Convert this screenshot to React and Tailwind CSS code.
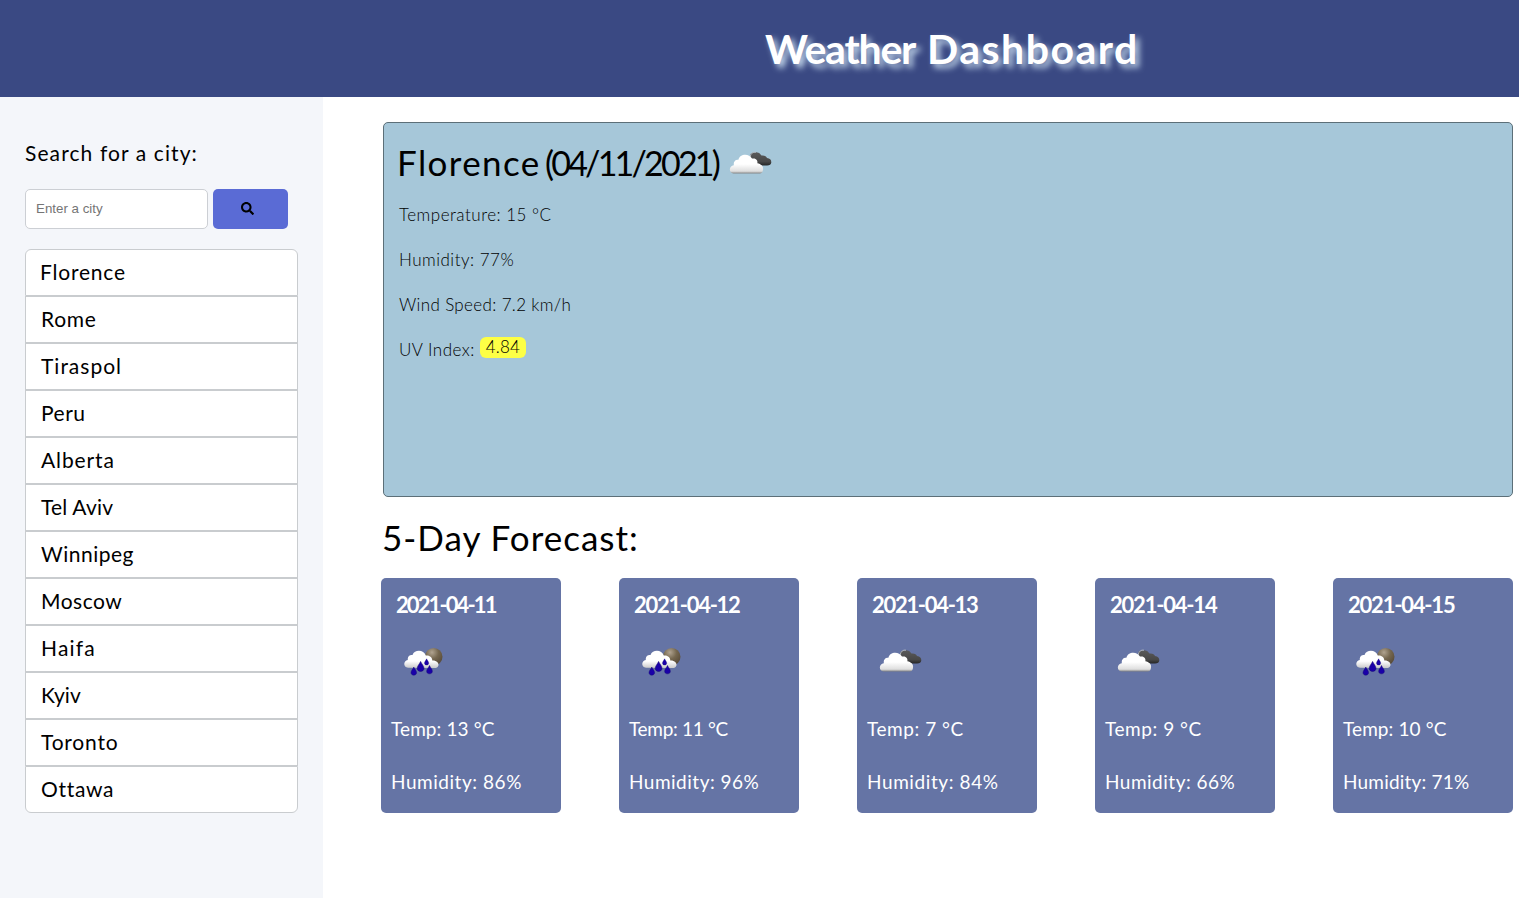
import React from "react";

const cities = [
  { name: "Florence", tracking: "tracking-[0.8px] -ml-px" },
  { name: "Rome", tracking: "tracking-[0.7px]" },
  { name: "Tiraspol", tracking: "tracking-[1px]" },
  { name: "Peru", tracking: "tracking-[0.5px]" },
  { name: "Alberta", tracking: "tracking-[0.9px]" },
  { name: "Tel Aviv", tracking: "tracking-[0.2px]" },
  { name: "Winnipeg", tracking: "tracking-[0.5px]" },
  { name: "Moscow", tracking: "tracking-[0.5px]" },
  { name: "Haifa", tracking: "tracking-[1.2px]" },
  { name: "Kyiv", tracking: "tracking-[0.1px]" },
  { name: "Toronto", tracking: "tracking-[0.8px]" },
  { name: "Ottawa", tracking: "tracking-[0.7px]" },
];

const days = [
  { date: "2021-04-11", icon: "rain", temp: "13", humidity: "86", dateTracking: "tracking-[-1.9px]", tempTracking: "tracking-[0.1px]", humidityTracking: "tracking-[0.55px]" },
  { date: "2021-04-12", icon: "rain", temp: "11", humidity: "96", dateTracking: "tracking-[-1.3px]", tempTracking: "tracking-[-0.3px]", humidityTracking: "tracking-[0.5px]" },
  { date: "2021-04-13", icon: "cloud", temp: "7", humidity: "84", dateTracking: "tracking-[-1.3px]", tempTracking: "tracking-[0.55px]", humidityTracking: "tracking-[0.6px]" },
  { date: "2021-04-14", icon: "cloud", temp: "9", humidity: "66", dateTracking: "tracking-[-1.2px]", tempTracking: "tracking-[0.55px]", humidityTracking: "tracking-[0.5px]" },
  { date: "2021-04-15", icon: "rain", temp: "10", humidity: "71", dateTracking: "tracking-[-1.2px]", tempTracking: "tracking-[0.1px]", humidityTracking: "tracking-[0.2px]" },
];

function Gradients() {
  return (
    <svg className="absolute h-0 w-0" aria-hidden="true">
      <defs>
        <linearGradient id="white-cloud" x1="0" y1="0" x2="0" y2="1">
          <stop offset="0.5" stopColor="#ffffff" />
          <stop offset="0.88" stopColor="#dedede" />
          <stop offset="1" stopColor="#858585" />
        </linearGradient>
        <linearGradient id="dark-cloud" x1="0" y1="0" x2="0" y2="1">
          <stop offset="0" stopColor="#5a5a5a" />
          <stop offset="0.7" stopColor="#484848" />
          <stop offset="1" stopColor="#262626" />
        </linearGradient>
        <linearGradient id="rain-cloud" x1="0" y1="0" x2="0" y2="1">
          <stop offset="0.6" stopColor="#ffffff" />
          <stop offset="1" stopColor="#c9c9c9" />
        </linearGradient>
        <radialGradient id="moon" cx="0.4" cy="0.25" r="0.75">
          <stop offset="0" stopColor="#b0a390" />
          <stop offset="0.5" stopColor="#75674f" />
          <stop offset="1" stopColor="#574a38" />
        </radialGradient>
      </defs>
    </svg>
  );
}

function CloudIcon() {
  return (
    <svg className="block h-[50px] w-[50px]" viewBox="0 0 50 50">
      <path
        d="M25 18.5 Q25.500 15 30 15.500 Q34 14.600 36.500 18.500 Q41 18 42 21 Q46.500 21.600 46.300 25.500 Q46 28.500 42 28.500 H30 Z"
        fill="url(#dark-cloud)"
      />
      <path d="M25 20 Q26.500 14.300 31 15.200" fill="none" stroke="#b9bfc6" strokeWidth="0.9" />
      <path
        d="M8.500 36.500 C3.500 36 3.700 28.800 8.800 28.300 C8.300 23.500 11.500 22.500 13.400 22.800 C14.500 16.700 24 15.800 27 21.600 C31 20.600 33 23.500 32.400 26.200 C36 27 38.300 29 38.100 32 C38 35 36.500 36.500 34.800 36.500 Z"
        fill="url(#white-cloud)"
      />
    </svg>
  );
}

function Drop({ x, y, scale }) {
  return (
    <path
      transform={`translate(${x} ${y}) scale(${scale})`}
      d="M0 -5 C1 -2.500 3.400 -0.500 3.400 2 C3.400 6 -3.400 6 -3.400 2 C-3.400 -0.500 -1 -2.500 0 -5 Z"
      fill="#1a00a8"
      stroke="#100070"
      strokeWidth="0.5"
    />
  );
}

function RainIcon() {
  return (
    <svg className="block h-[50px] w-[50px]" viewBox="0 0 50 50">
      <circle cx="34.700" cy="21.800" r="8.800" fill="url(#moon)" />
      <path
        d="M9 32.800 C4 32.100 4.100 25.800 8.800 25 C8.500 20.800 11.200 19.800 13.500 20 C15.500 14.100 25 14.500 26.800 20.500 C30.500 19.800 33.500 22.600 33.300 25.500 C37.500 25.300 39.800 27.800 39.500 30.300 C39.100 32.500 37.500 33.100 35 33.100 Z"
        fill="url(#rain-cloud)"
      />
      <Drop x={14.8} y={36.1} scale={0.82} />
      <Drop x={21.6} y={31.4} scale={1} />
      <Drop x={30.5} y={34.6} scale={0.84} />
      <Drop x={27.6} y={26.9} scale={0.62} />
    </svg>
  );
}

function SearchIcon() {
  return (
    <svg className="h-[13px] w-[13px] fill-black" viewBox="0 0 512 512">
      <path d="M505 442.700L405.300 343c-4.500-4.500-10.600-7-17-7H372c27.600-35.300 44-79.700 44-128C416 93.100 322.900 0 208 0S0 93.100 0 208s93.100 208 208 208c48.300 0 92.700-16.400 128-44v16.300c0 6.400 2.500 12.500 7 17l99.700 99.700c9.400 9.400 24.600 9.400 33.900 0l28.300-28.300c9.400-9.400 9.400-24.600.1-34zM208 336c-70.700 0-128-57.200-128-128 0-70.700 57.200-128 128-128 70.700 0 128 57.200 128 128 0 70.700-57.200 128-128 128z" />
    </svg>
  );
}

export default function App() {
  return (
    <div className="flex h-[898px] flex-col overflow-hidden bg-white font-['Lato',sans-serif] text-black">
      <Gradients />
      <header className="flex h-[97px] shrink-0 items-center bg-[#3a4983] pl-[765px]">
        <h1 className="whitespace-nowrap text-[41px] font-bold leading-none text-white [text-shadow:4px_4px_6px_#c5d9ec]">
          <span className="tracking-[-1.2px]">Weather </span>
          <span className="ml-1 tracking-[1.5px]">Dashboard</span>
        </h1>
      </header>

      <div className="flex min-h-0 flex-1">
        <aside className="w-[323px] shrink-0 bg-[#f4f6fa] pl-[25px] pr-[25px] pt-[41px]">
          <h2 className="h-[31px] whitespace-nowrap text-[21px] leading-[30px] tracking-[1.1px]">
            Search for a city:
          </h2>
          <div className="mt-5 flex gap-[5px]">
            <input
              type="text"
              placeholder="Enter a city"
              className="h-10 w-[183px] rounded-[5px] border border-[#cccfd4] bg-white px-2.5 pb-0.5 font-['Liberation_Sans',sans-serif] text-[13.333px] placeholder:text-[#757575]"
            />
            <button className="flex h-10 w-[75px] items-center justify-center rounded-[5px] bg-[#5a6bd5] pb-0.5 pr-1.5">
              <SearchIcon />
            </button>
          </div>
          <ul className="mt-5 w-[273px]">
            {cities.map((city) => (
              <li
                key={city.name}
                className="flex h-[47px] items-center border border-[#c9cccf] bg-white pb-px pl-[15px] text-[21px] first:rounded-t-[6px] last:rounded-b-[6px]"
              >
                <span className={city.tracking}>{city.name}</span>
              </li>
            ))}
          </ul>
        </aside>

        <main className="flex-1 pl-[58px] pr-1.5 pt-[25px]">
          <section className="ml-0.5 h-[375px] rounded-[5px] border border-[#5c6f78] bg-[#a6c7d9] pl-[15px]">
            <div className="flex h-[50px] pt-3.5">
              <h2 className="-ml-0.5 w-[148px] whitespace-nowrap text-[35px] leading-[50px] tracking-[1.4px]">Florence</h2>
              <span className="w-[180px] whitespace-nowrap text-[34px] leading-[51px] tracking-[-2.8px]">(04/11/2021)</span>
              <CloudIcon />
            </div>
            <div className="mt-[19px] text-[17px] font-light leading-[45px]">
              <p className="h-[45px] tracking-[0.5px]">Temperature: 15 °C</p>
              <p className="h-[45px] tracking-[0.5px]">Humidity: 77%</p>
              <p className="h-[45px] tracking-[0.35px]">Wind Speed: 7.2 km/h</p>
              <p className="flex h-[45px] tracking-[0.5px]">
                <span className="w-[81px]">UV Index:</span>
                <span className="mt-[10px] h-[21px] w-[46px] rounded-[6px] bg-[#fdff45] text-center leading-[19px] tracking-[0.2px]">4.84</span>
              </p>
            </div>
          </section>

          <h2 className="ml-px mt-[15px] h-[52px] whitespace-nowrap text-[35px] leading-[50px] tracking-[1px]">
            5-Day Forecast:
          </h2>

          <div className="mt-[14px] flex justify-between">
            {days.map((day) => (
              <article key={day.date} className="h-[235px] w-[180px] rounded-[5px] bg-[#6574a5] pl-2.5 text-white">
                <h3 className="pl-[5px] pt-3 text-[22px] font-bold leading-[30px]">
                  <span className={day.dateTracking}>{day.date}</span>
                </h3>
                <div className="mt-[15px] pl-2">{day.icon === "rain" ? <RainIcon /> : <CloudIcon />}</div>
                <p className="mt-[29px] text-[19px] leading-[30px]">
                  <span className={day.tempTracking}>Temp: {day.temp} °C</span>
                </p>
                <p className="mt-[23px] text-[19px] leading-[30px]">
                  <span className={day.humidityTracking}>Humidity: {day.humidity}%</span>
                </p>
              </article>
            ))}
          </div>
        </main>
      </div>
    </div>
  );
}
